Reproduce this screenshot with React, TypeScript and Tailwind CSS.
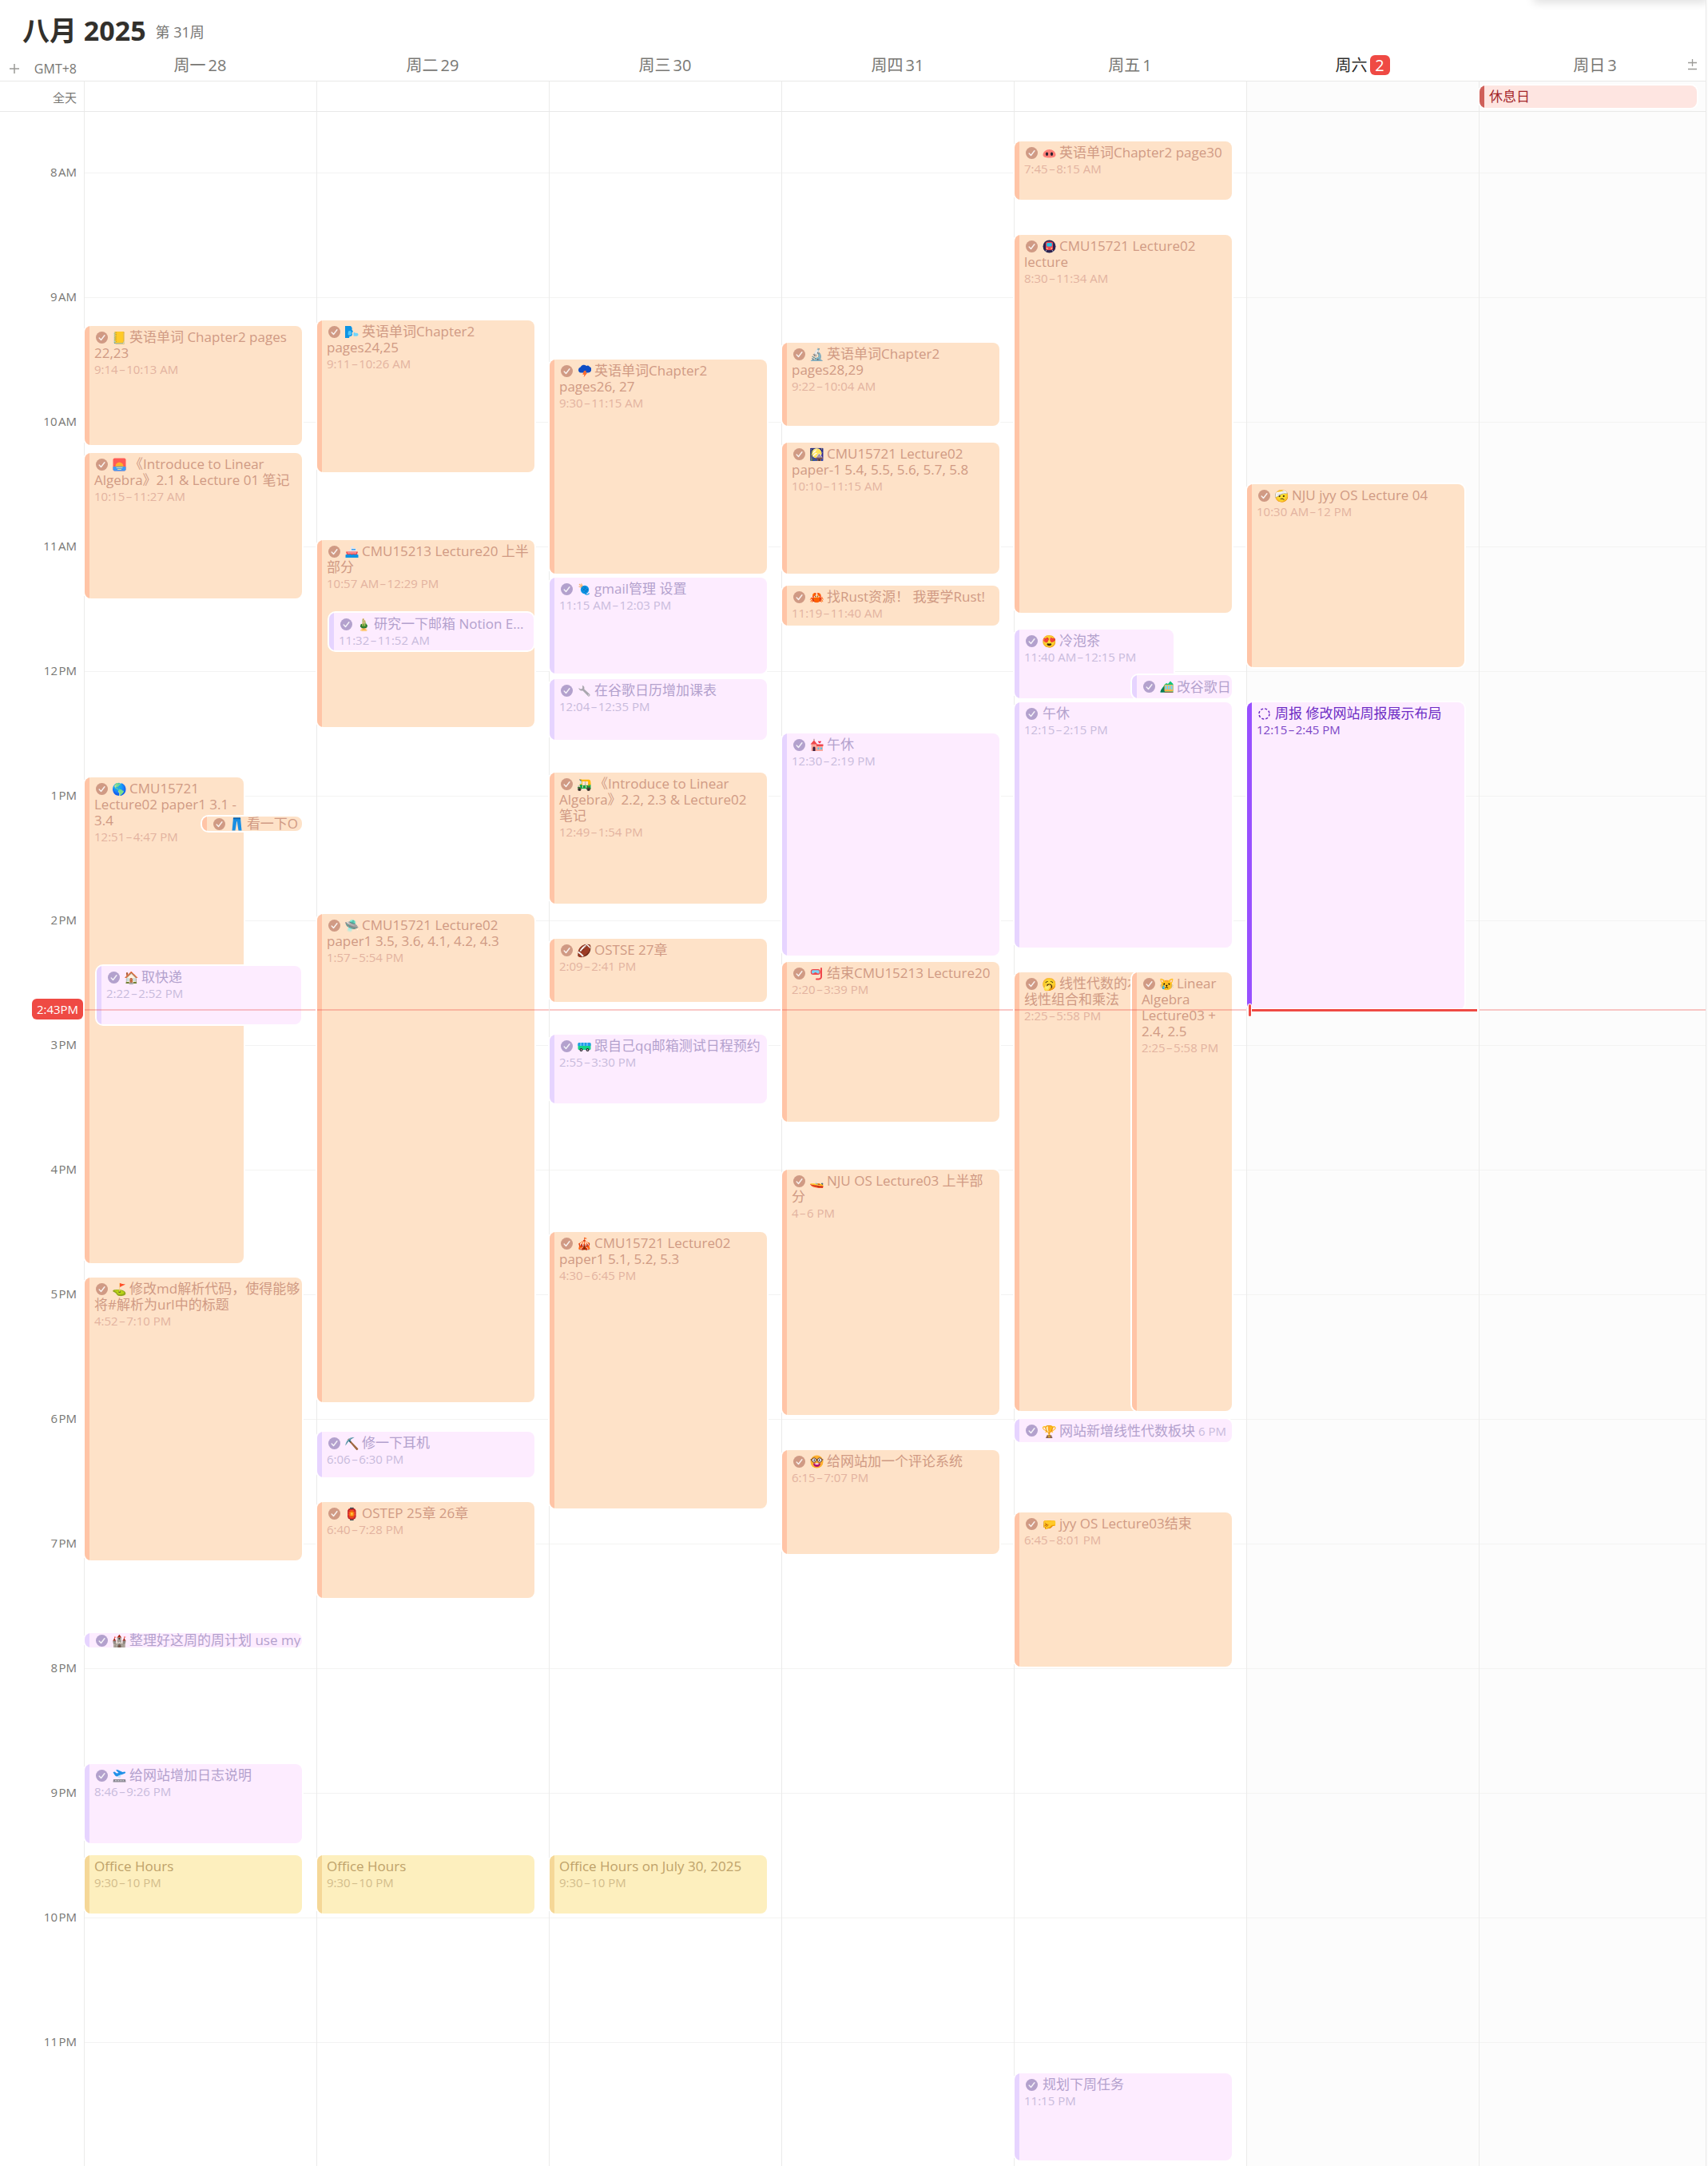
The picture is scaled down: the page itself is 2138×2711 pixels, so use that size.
import type { ReactNode } from "react";

type Tone = "orange" | "purple" | "yellow" | "active";
type Lane = "full" | "inset" | "left" | "right";

interface CalendarEvent {
  title: string;
  icon?: ReactNode;
  start: string;
  end: string;
  time?: string;
  tone: Tone;
  lane?: Lane;
  inlineTime?: boolean;
  singleLine?: boolean;
}

interface Day {
  weekday: string;
  date: number;
  weekend?: boolean;
  today?: boolean;
  allDay?: string;
  events: CalendarEvent[];
}

const HOUR = 156;
const FIRST_HOUR = 7;
const NOW = "14:43";
const HAIR = "\u200A";

const tones: Record<Tone, { box: string; bar: string; title: string; time: string }> = {
  orange: { box: "bg-[#fee2c8]", bar: "bg-[#ffc4a6]", title: "text-[#d09a84]", time: "text-[#e3b3a0]" },
  purple: { box: "bg-[#fdecff]", bar: "bg-[#e6d4ff]", title: "text-[#b3a1cd]", time: "text-[#c8bbdc]" },
  yellow: { box: "bg-[#fdefbe]", bar: "bg-[#f5d797]", title: "text-[#bfa26a]", time: "text-[#d3bd8c]" },
  active: { box: "bg-[#fdecff]", bar: "bg-[#9850ff]", title: "text-[#6d2cc4]", time: "text-[#7c45c6]" },
};

const lanes: Record<Lane, string> = {
  full: "left-0 right-0",
  inset: "left-[15px] right-px",
  left: "left-0 w-[73%]",
  right: "left-[54%] right-0",
};

function minutes(clock: string) {
  const [h, m] = clock.split(":").map(Number);
  return h * 60 + m;
}

function offsetOf(clock: string) {
  return Math.round(((minutes(clock) - FIRST_HOUR * 60) / 60) * HOUR);
}

function clockLabel(clock: string) {
  const total = minutes(clock);
  const h = Math.floor(total / 60) % 12 || 12;
  const m = total % 60;
  return m ? `${h}:${String(m).padStart(2, "0")}` : `${h}`;
}

function rangeLabel(start: string, end: string) {
  const a = minutes(start) < 720 ? "AM" : "PM";
  const b = minutes(end) < 720 ? "AM" : "PM";
  const left = a === b ? clockLabel(start) : `${clockLabel(start)} ${a}`;
  return `${left}${HAIR}–${HAIR}${clockLabel(end)} ${b}`;
}

function Glyph({ children }: { children: ReactNode }) {
  return (
    <svg viewBox="0 0 17 17" className="size-[17px]" aria-hidden="true">
      {children}
    </svg>
  );
}

function StormCloud() {
  return (
    <Glyph>
      <path d="M4 10.500a3.600 3.600 0 0 1-.4-7A4.600 4.600 0 0 1 11 2a3.300 3.300 0 0 1 4 .9 4 4 0 0 1-1.500 7.600z" fill="#0f4cc4" />
      <path d="M8 8h3l-1 2.800h2.200L7.600 16.300l.8-3.500H6.300z" fill="#ff6a2b" />
    </Glyph>
  );
}

function Yarn() {
  return (
    <Glyph>
      <path d="M2 2l5 5M4.500 1.500l2 4M1.500 5l4 1.500" stroke="#f6b26b" strokeWidth="1.200" fill="none" />
      <circle cx="9" cy="9" r="5.200" fill="#0d94e4" />
      <path d="M5.500 7l6.500 5M7 5l6 5M6 11l5-6M8.500 13l4.500-5" stroke="#0a6ab5" strokeWidth=".7" />
      <path d="M9 14.200c2.500 1.500 5 1 5.500-.7" stroke="#0d94e4" strokeWidth="1.100" fill="none" />
    </Glyph>
  );
}

function Minibus() {
  return (
    <Glyph>
      <rect x="0.500" y="4" width="16" height="9" rx="1.500" fill="#12d38a" />
      <path d="M.5 5.500A1.500 1.500 0 0 1 2 4h13a1.500 1.500 0 0 1 1.500 1.500V8H.5z" fill="#1f9bea" />
      <path d="M4 4v4M8 4v4M12 4v4" stroke="#bff0ff" strokeWidth=".8" />
      <circle cx="4.500" cy="13" r="2" fill="#26202b" />
      <circle cx="12.500" cy="13" r="2" fill="#26202b" />
      <circle cx="4.500" cy="13" r=".8" fill="#fff" />
      <circle cx="12.500" cy="13" r=".8" fill="#fff" />
    </Glyph>
  );
}

function Ferry() {
  return (
    <Glyph>
      <path d="M7 2.500l3-1.500v3l4 .5v4H4V6.500h3z" fill="#e3e6ee" />
      <path d="M8 5h5v1.500H8z" fill="#3a9ff0" />
      <path d="M1 8.500h15L14.500 13h-12z" fill="#f0474c" />
      <path d="M3 10h11" stroke="#fff" strokeWidth=".7" />
      <path d="M.5 12.500l2-1 2 1 2-1 2 1 2-1 2 1 2-1 2 1V16H.5z" fill="#0d94e4" />
    </Glyph>
  );
}

function Wrench() {
  return (
    <Glyph>
      <path
        d="M5.800 1.800a4 4 0 0 1 2.500 4.800l6.800 6.200a1.600 1.600 0 0 1-2.300 2.300L6.500 8.400A4 4 0 0 1 1.300 5l2.400 1.600 2.200-.6.3-2.200z"
        fill="#a9a7ae"
      />
      <circle cx="13.800" cy="13.900" r=".7" fill="#fdecff" />
    </Glyph>
  );
}

function WindFace() {
  return (
    <Glyph>
      <path d="M0 1h7c1.800 1.500 2 3 1.500 4.500L10 8 8.500 9.500 9 12c-.5 1.800-2 2-3.500 2L5 16H0z" fill="#0d94e4" />
      <path d="M4 7.500c1.500-.8 3-.8 3.500.2l.3 4.300c-1.500 1-3.500 1-4.300-.3z" fill="#4fc6fa" />
      <path d="M10.500 10.500c0-1.800 2.200-1.800 2.300-.3 2-1.200 4 0 3.600 2-.4 1.800-3 1.800-5.900 1.300z" fill="#6fd4fb" />
    </Glyph>
  );
}

function Sunrise() {
  return (
    <Glyph>
      <rect x=".5" y=".5" width="16" height="16" rx="2" fill="#ff5a55" />
      <path d="M3.500 11a5 5.500 0 1 1 10 0z" fill="#ffb02e" />
      <path d="M.5 11h16v3.500a2 2 0 0 1-2 2h-12a2 2 0 0 1-2-2z" fill="#3f9bfb" />
      <path d="M5 12.500h7M6.500 14.500h4" stroke="#fde68a" strokeWidth=".9" strokeLinecap="round" />
    </Glyph>
  );
}

function Jeans() {
  return (
    <Glyph>
      <path d="M4 .5h9l1.500 16h-4L8.700 5h-.4L6.500 16.500h-4z" fill="#1a8fe3" />
      <path d="M4 .5h9l.2 1.800H3.800z" fill="#0a63b0" />
    </Glyph>
  );
}

function PigNose() {
  return (
    <Glyph>
      <path d="M8.500 4C12.500 4 16.500 7 16.500 11c0 2.500-3.500 3.500-8 3.500s-8-1-8-3.500c0-4 4-7 8-7z" fill="#ff8078" />
      <ellipse cx="5.500" cy="9.800" rx="1.600" ry="2.200" fill="#2b2130" />
      <ellipse cx="11.500" cy="9.800" rx="1.600" ry="2.200" fill="#2b2130" />
    </Glyph>
  );
}

function Metro() {
  return (
    <Glyph>
      <circle cx="8.500" cy="8.500" r="8" fill="#2b2350" />
      <rect x="4" y="2.500" width="9" height="10.500" rx="2" fill="#ef4655" />
      <rect x="5.200" y="4" width="6.600" height="4.500" rx="1" fill="#20c4e8" />
      <circle cx="5.800" cy="10.800" r=".9" fill="#ffe27a" />
      <circle cx="11.200" cy="10.800" r=".9" fill="#ffe27a" />
      <path d="M5 13l-1.500 2M12 13l1.500 2" stroke="#a9b4c6" strokeWidth="1" />
    </Glyph>
  );
}

function LoveHotel() {
  return (
    <Glyph>
      <path d="M1.500 7L5 3l3 4v9h-6.500zM8 8.500h8V16H8z" fill="#f9a79b" />
      <path d="M.5 7.500L5 2.500l4 5zM8 7.500h8.500V10H8z" fill="#f0474c" />
      <path d="M12 6.500l-1.800-1.700c-.6-1 .9-2 1.800-.8.900-1.200 2.400-.2 1.800.8z" fill="#f0304d" />
      <path d="M5 .8v2" stroke="#8a5b50" strokeWidth=".8" />
      <path d="M3.500 12a1.500 1.500 0 0 1 3 0v4h-3z" fill="#3a1e3d" />
      <path d="M9.500 11.500h2v2.500h-2zM13 11.500h2v2.500h-2z" fill="#54c7ec" />
    </Glyph>
  );
}

function MountainTrain() {
  return (
    <Glyph>
      <path d="M.5 15.500C1.500 11 4 9.500 5.500 6l2.500-2 2 1 3-3.500L16.500 5v10.500z" fill="#11c57a" />
      <path d="M.5 15.500C1 11.500 4 9.500 6 7.500v8z" fill="#0b7a55" />
      <rect x="5.500" y="6" width="11" height="8.500" rx="1" fill="#ffb44d" />
      <path d="M6.500 7h2.300v5H6.500zM9.900 7h2.300v5H9.900zM13.300 7h2.300v5h-2.300z" fill="#6fd4fb" />
      <path d="M5.500 15.500h11" stroke="#8d6a5a" strokeWidth="1" />
    </Glyph>
  );
}

function Takeoff() {
  return (
    <Glyph>
      <path d="M.5 4l2-.5L5 5.500l2.500-.6L4 1.500l2-.5 6.500 3 2.500-.4c1.200 0 1.500 1.200.5 1.800L5.500 9.500C3.500 9.800 1.500 6 .5 4z" fill="#2191e8" />
      <path d="M5.500 9.500l5.500-2.800L9.500 11 8 11.500z" fill="#c9e3f8" />
      <path d="M1 13h15l.5 3.500H.5z" fill="#8d8b95" />
      <path d="M3 14.700h11" stroke="#e7e6ea" strokeWidth=".8" strokeDasharray="2 1.200" />
    </Glyph>
  );
}

function DivingMask() {
  return (
    <Glyph>
      <path d="M14 2v10a3 3 0 0 1-3 3.500H8" fill="none" stroke="#f0474c" strokeWidth="2" strokeLinecap="round" />
      <rect x=".8" y="3" width="12" height="7" rx="3" fill="#f0474c" />
      <path d="M3.500 4.300h6.600c2 0 2 4.200 0 4.200-1.500 0-2-1.500-3.300-1.500S5 8.500 3.500 8.500c-2 0-2-4.200 0-4.200z" fill="#7cd3f5" />
    </Glyph>
  );
}

function Jester() {
  return (
    <Glyph>
      <circle cx="8.500" cy="8.500" r="8" fill="#ffb02e" />
      <path d="M.5 6h16" stroke="#5a3326" strokeWidth="1" />
      <circle cx="5" cy="6.500" r="2.700" fill="#fff" stroke="#5a3326" strokeWidth="1" />
      <circle cx="12" cy="6.500" r="2.700" fill="#fff" stroke="#5a3326" strokeWidth="1" />
      <circle cx="5.300" cy="6.500" r="1" fill="#2b2130" />
      <circle cx="11.700" cy="6.500" r="1" fill="#2b2130" />
      <path d="M4 10.500h9c0 3-2 4.500-4.500 4.500S4 13.500 4 10.500z" fill="#b4146e" />
      <path d="M6.500 10.500h4v1.500h-4z" fill="#fff" />
    </Glyph>
  );
}

function Badge({ open }: { open?: boolean }) {
  return (
    <span className="mx-0.5 inline-flex h-5 items-center align-top">
      <svg viewBox="0 0 15 15" className="size-[15px]" fill="none" aria-hidden="true">
        {open ? (
          <circle cx="7.500" cy="7.500" r="6.500" stroke="currentColor" strokeWidth="1.500" strokeDasharray="3 2.100" />
        ) : (
          <>
            <circle cx="7.500" cy="7.500" r="7.500" fill="currentColor" />
            <path d="M4.200 8l2.300 2.500 4.400-5.700" stroke="#fff" strokeOpacity=".85" strokeWidth="1.500" strokeLinecap="round" strokeLinejoin="round" />
          </>
        )}
      </svg>
    </span>
  );
}

const days: Day[] = [
  {
    weekday: "周一",
    date: 28,
    events: [
      { title: "英语单词 Chapter2 pages 22,23", icon: "📒", start: "9:14", end: "10:13", tone: "orange" },
      { title: "《Introduce to Linear Algebra》2.1 & Lecture 01 笔记", icon: <Sunrise />, start: "10:15", end: "11:27", tone: "orange" },
      { title: "CMU15721 Lecture02 paper1 3.1 - 3.4", icon: "🌎", start: "12:51", end: "16:47", tone: "orange", lane: "left" },
      { title: "看一下O", icon: <Jeans />, start: "13:10", end: "13:18", tone: "orange", lane: "right", singleLine: true },
      { title: "取快递", icon: "🏠", start: "14:22", end: "14:52", tone: "purple", lane: "inset" },
      { title: "修改md解析代码，使得能够将#解析为url中的标题", icon: "⛳", start: "16:52", end: "19:10", tone: "orange" },
      { title: "整理好这周的周计划 use my", icon: "🏰", start: "19:43", end: "19:51", tone: "purple", singleLine: true },
      { title: "给网站增加日志说明", icon: <Takeoff />, start: "20:46", end: "21:26", tone: "purple" },
      { title: "Office Hours", start: "21:30", end: "22:00", tone: "yellow" },
    ],
  },
  {
    weekday: "周二",
    date: 29,
    events: [
      { title: "英语单词Chapter2 pages24,25", icon: <WindFace />, start: "9:11", end: "10:26", tone: "orange" },
      { title: "CMU15213 Lecture20 上半部分", icon: <Ferry />, start: "10:57", end: "12:29", tone: "orange" },
      { title: "研究一下邮箱 Notion Email", icon: "🎍", start: "11:32", end: "11:52", tone: "purple", lane: "inset", singleLine: true },
      { title: "CMU15721 Lecture02 paper1 3.5, 3.6, 4.1, 4.2, 4.3", icon: "🛸", start: "13:57", end: "17:54", tone: "orange" },
      { title: "修一下耳机", icon: "⛏️", start: "18:06", end: "18:30", tone: "purple" },
      { title: "OSTEP 25章 26章", icon: "🏮", start: "18:40", end: "19:28", tone: "orange" },
      { title: "Office Hours", start: "21:30", end: "22:00", tone: "yellow" },
    ],
  },
  {
    weekday: "周三",
    date: 30,
    events: [
      { title: "英语单词Chapter2 pages26, 27", icon: <StormCloud />, start: "9:30", end: "11:15", tone: "orange" },
      { title: "gmail管理 设置", icon: <Yarn />, start: "11:15", end: "12:03", tone: "purple" },
      { title: "在谷歌日历增加课表", icon: <Wrench />, start: "12:04", end: "12:35", tone: "purple" },
      { title: "《Introduce to Linear Algebra》2.2, 2.3 & Lecture02\n笔记", icon: "🛺", start: "12:49", end: "13:54", tone: "orange" },
      { title: "OSTSE 27章", icon: "🏈", start: "14:09", end: "14:41", tone: "orange" },
      { title: "跟自己qq邮箱测试日程预约", icon: <Minibus />, start: "14:55", end: "15:30", tone: "purple" },
      { title: "CMU15721 Lecture02 paper1 5.1, 5.2, 5.3", icon: "🎪", start: "16:30", end: "18:45", tone: "orange" },
      { title: "Office Hours on July 30, 2025", start: "21:30", end: "22:00", tone: "yellow" },
    ],
  },
  {
    weekday: "周四",
    date: 31,
    events: [
      { title: "英语单词Chapter2 pages28,29", icon: "🔬", start: "9:22", end: "10:04", tone: "orange" },
      { title: "CMU15721 Lecture02 paper-1 5.4, 5.5, 5.6, 5.7, 5.8", icon: "🎑", start: "10:10", end: "11:15", tone: "orange" },
      { title: "找Rust资源！ 我要学Rust!", icon: "🦀", start: "11:19", end: "11:40", tone: "orange" },
      { title: "午休", icon: <LoveHotel />, start: "12:30", end: "14:19", tone: "purple" },
      { title: "结束CMU15213 Lecture20", icon: <DivingMask />, start: "14:20", end: "15:39", tone: "orange" },
      { title: "NJU OS Lecture03 上半部\n分", icon: "🚤", start: "16:00", end: "18:00", tone: "orange" },
      { title: "给网站加一个评论系统", icon: <Jester />, start: "18:15", end: "19:07", tone: "orange" },
    ],
  },
  {
    weekday: "周五",
    date: 1,
    events: [
      { title: "英语单词Chapter2 page30", icon: <PigNose />, start: "7:45", end: "8:15", tone: "orange" },
      { title: "CMU15721 Lecture02 lecture", icon: <Metro />, start: "8:30", end: "11:34", tone: "orange" },
      { title: "冷泡茶", icon: "😍", start: "11:40", end: "12:15", tone: "purple", lane: "left" },
      { title: "改谷歌日", icon: <MountainTrain />, start: "12:02", end: "12:15", tone: "purple", lane: "right", singleLine: true },
      { title: "午休", start: "12:15", end: "14:15", tone: "purple" },
      { title: "线性代数的本质\n线性组合和乘法", icon: "🥱", start: "14:25", end: "17:58", tone: "orange", lane: "left" },
      { title: "Linear Algebra Lecture03 + 2.4, 2.5", icon: "😿", start: "14:25", end: "17:58", tone: "orange", lane: "right" },
      { title: "网站新增线性代数板块", icon: "🏆", start: "18:00", end: "18:13", tone: "purple", time: "6 PM", inlineTime: true },
      { title: "jyy OS Lecture03结束", icon: "🤛", start: "18:45", end: "20:01", tone: "orange" },
      { title: "规划下周任务", start: "23:15", end: "23:59", tone: "purple", time: "11:15 PM" },
    ],
  },
  {
    weekday: "周六",
    date: 2,
    weekend: true,
    today: true,
    events: [
      { title: "NJU jyy OS Lecture 04", icon: "🤕", start: "10:30", end: "12:00", tone: "orange" },
      { title: "周报 修改网站周报展示布局", start: "12:15", end: "14:45", tone: "active" },
    ],
  },
  { weekday: "周日", date: 3, weekend: true, allDay: "休息日", events: [] },
];

const hours = Array.from({ length: 17 }, (_, i) => FIRST_HOUR + i);

function EventCard({ event }: { event: CalendarEvent }) {
  const tone = tones[event.tone];
  const top = offsetOf(event.start);
  const height = Math.max(offsetOf(event.end) - top - 5, 18);
  const compact = height < 35;
  const hasCheck = event.tone !== "yellow";
  const time = event.time ?? rangeLabel(event.start, event.end);
  const wrap = !event.singleLine ? "whitespace-pre-line" : compact ? "overflow-hidden whitespace-nowrap" : "truncate pr-2";
  return (
    <button
      type="button"
      className={`absolute flex overflow-hidden rounded-lg text-left shadow-[0_0_0_2px_#fff] ${tone.box} ${lanes[event.lane ?? "full"]}`}
      style={{ top, height }}
    >
      <span className={`w-1.5 flex-none self-stretch ${tone.bar}`} />
      <span className={`min-w-0 flex-1 pl-1.5 leading-5 ${compact ? "self-center" : "self-start pr-0.5 pt-1"}`}>
        <span className={`block text-[17px] leading-5 ${tone.title} ${wrap}`}>
          {hasCheck && <Badge open={event.tone === "active"} />}
          {event.icon ? (
            <span className="mx-1 inline-flex h-5 w-[17px] items-center justify-center align-top text-[15px] leading-5">
              {event.icon}
            </span>
          ) : (
            hasCheck && <span className="inline-block w-1" />
          )}
          {event.title}
          {event.inlineTime && <span className={`ml-1 text-[15px] ${tone.time}`}>{time}</span>}
        </span>
        {!compact && <span className={`block whitespace-nowrap text-[15px] leading-5 ${tone.time}`}>{time}</span>}
      </span>
    </button>
  );
}

function NowLine({ today }: { today?: boolean }) {
  const top = offsetOf(NOW) - 1;
  if (!today) {
    return <div className="absolute inset-x-0 h-0.5 bg-[#ef4a44]/30" style={{ top }} />;
  }
  return (
    <div className="absolute inset-x-0 flex h-[3px] items-center" style={{ top }}>
      <span className="relative z-10 ml-0.5 h-[15px] w-[3px] flex-none rounded-sm bg-[#ef4a44] shadow-[0_0_0_1px_#fff]" />
      <span className="mr-0.5 h-[3px] flex-1 bg-[#ef4a44] shadow-[0_0_0_1px_#fff]" />
    </div>
  );
}

export default function App() {
  return (
    <main className="relative flex h-screen flex-col overflow-hidden bg-white font-['Open_Sans','Noto_Sans_CJK_SC',sans-serif] text-[#787774]">
      <div className="absolute -top-2 right-0 h-2 w-[218px] shadow-[0_2px_12px_rgba(0,0,0,0.18)]" />

      <header className="flex h-[62px] flex-none items-center gap-3 pl-7 pt-3.5">
        <h1 className="text-[34px] font-bold leading-10 text-[#32302c]">八月 2025</h1>
        <span className="pt-1 text-[18px]">第 31周</span>
      </header>

      <div className="flex h-10 flex-none border-b border-[#e9e9e8]">
        <div className="flex w-[105px] flex-none items-center justify-between pl-3 pr-[9px] pt-2">
          <button type="button" aria-label="添加时区" className="text-[#9b9a97]">
            <svg viewBox="0 0 12 12" className="size-3" stroke="currentColor" strokeWidth="1.500">
              <path d="M6 0v12M0 6h12" />
            </svg>
          </button>
          <span className="text-[16px]">GMT+8</span>
        </div>
        <div className="-mr-1 grid flex-1 grid-cols-7">
          {days.map((day) => (
            <div key={day.date} className="flex items-center justify-center gap-[3px] text-[20px] leading-[25px]">
              <span className={day.today ? "text-[#2c2c2b]" : ""}>{day.weekday}</span>
              {day.today ? (
                <span className="w-[25px] rounded-md bg-[#ef4a44] text-center font-medium text-white">{day.date}</span>
              ) : (
                <span>{day.date}</span>
              )}
            </div>
          ))}
        </div>
        <button type="button" aria-label="调整天数" className="absolute right-3.5 top-[74px] text-[#9b9a97]">
          <svg viewBox="0 0 11 14" className="h-3.5 w-[11px]" stroke="currentColor" strokeWidth="1.300">
            <path d="M5.500 0v9M0 4.500h11M0 12.500h11" />
          </svg>
        </button>
      </div>

      <div className="flex h-[38px] flex-none border-b border-[#e9e9e8]">
        <div className="flex w-[105px] flex-none items-center justify-end pr-[9px] pt-1 text-[15px]">全天</div>
        <div className="-mr-1 grid flex-1 grid-cols-7">
          {days.map((day) => (
            <div key={day.date} className={`border-l border-[#ebebea] pr-[18px] pt-[5px] ${day.weekend ? "bg-[#fcfcfc]" : ""}`}>
              {day.allDay && (
                <button type="button" className="flex h-7 w-full items-center overflow-hidden rounded-lg bg-[#fee5e1] text-left text-[17px] text-[#a3262b] shadow-[0_0_0_2px_#fff]">
                  <span className="h-full w-1.5 flex-none bg-[#cf5f59]" />
                  <span className="pl-1.5">{day.allDay}</span>
                </button>
              )}
            </div>
          ))}
        </div>
      </div>

      <div className="min-h-0 flex-1 overflow-hidden">
        <div className="-mt-20 flex">
          <div className="relative w-[105px] flex-none">
            {hours.map((hour) => (
              <div key={hour} className="h-[156px]">
                {hour > FIRST_HOUR && (
                  <div className="-translate-y-3 pr-[9px] text-right text-[15px] leading-[22px]">
                    {hour % 12 || 12}
                    {HAIR}
                    {hour < 12 ? "AM" : "PM"}
                  </div>
                )}
              </div>
            ))}
            <div
              className="absolute right-px flex h-[26px] w-16 -translate-y-1/2 items-center justify-center rounded-md bg-[#ef4a44] text-[15px] font-medium text-white"
              style={{ top: offsetOf(NOW) - 1 }}
            >
              2:43PM
            </div>
          </div>
          <div className="-mr-1 grid flex-1 grid-cols-7">
            {days.map((day) => (
              <section
                key={day.date}
                aria-label={`${day.weekday} ${day.date}`}
                className={`relative border-l border-[#ebebea] ${day.weekend ? "bg-[#fcfcfc]" : ""}`}
              >
                {hours.map((hour) => (
                  <div key={hour} className="h-[156px] border-t border-[#f3f3f2]" />
                ))}
                <div className="absolute inset-y-0 left-0 right-[18px]">
                  {day.events.map((event) => (
                    <EventCard key={event.start + event.title} event={event} />
                  ))}
                </div>
                <NowLine today={day.today} />
              </section>
            ))}
          </div>
        </div>
      </div>

      <div className="absolute inset-y-0 right-0 w-[3px] border-l border-[#e9e9e8] bg-[#fcfcfc]" />
    </main>
  );
}
